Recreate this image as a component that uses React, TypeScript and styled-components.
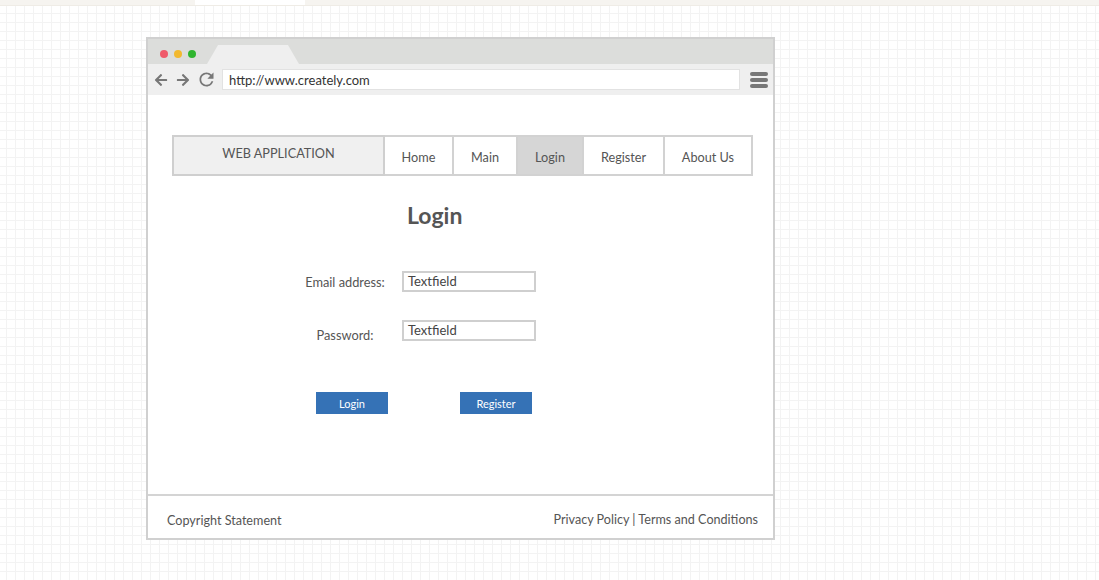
import styled, { createGlobalStyle } from "styled-components";
import { FaArrowLeft, FaArrowRight } from "react-icons/fa";
import { MdRefresh } from "react-icons/md";

const GlobalStyle = createGlobalStyle`
  html, body {
    margin: 0;
    padding: 0;
  }
  body {
    font-family: "Lato", "Liberation Sans", sans-serif;
    color: #555;
  }
`;

const Page = styled.div`
  width: 1099px;
  height: 580px;
  overflow: hidden;
  background-color: #fff;
  background-image:
    linear-gradient(to right, #f3f3f3 1px, transparent 1px),
    linear-gradient(to bottom, #f3f3f3 1px, transparent 1px);
  background-size: 9px 9px;
  background-position: 6px 4px;
`;

const TopStrip = styled.div`
  height: 5px;
  display: flex;
  background: #f6f4f0;
  border-bottom: 1px solid #efece6;
`;

const StripTab = styled.div`
  width: 110px;
  margin-left: 195px;
  background: #fff;
`;

const Stage = styled.div`
  padding: 31px 0 0 146px;
`;

const Window = styled.div`
  width: 625px;
  height: 499px;
  border: 2px solid #d0d0d0;
  display: flex;
  flex-direction: column;
  background: #fff;
`;

const TabBar = styled.div`
  height: 25px;
  background: #dcdddb;
  display: flex;
  align-items: flex-end;
  padding-left: 12px;
`;

const Dots = styled.div`
  display: flex;
  gap: 6px;
  align-self: center;
  margin-top: 4px;
`;

const Dot = styled.span<{ $color: string }>`
  width: 8px;
  height: 8px;
  border-radius: 50%;
  background: ${(p) => p.$color};
`;

const Tab = styled.div`
  width: 92px;
  height: 19px;
  margin-left: 11px;
  background: #efefef;
  clip-path: polygon(0 100%, 12% 0, 88% 0, 100% 100%);
`;

const AddressRow = styled.div`
  height: 31px;
  background: #efefef;
  display: flex;
  align-items: center;
  padding: 0 5px 0 6px;
  color: #777;
`;

const NavIcons = styled.div`
  display: flex;
  align-items: center;
  gap: 8px;
  font-size: 14px;
  width: 68px;
  svg:last-child {
    font-size: 21px;
    margin-left: -2px;
  }
`;

const AddressField = styled.div`
  flex: 1;
  height: 19px;
  background: #fff;
  border: 1px solid #e2e2e2;
  display: flex;
  align-items: center;
  padding-left: 6px;
  font-size: 13px;
  color: #333;
`;

const Burger = styled.div`
  width: 18px;
  margin-left: 10px;
  display: flex;
  flex-direction: column;
  gap: 2px;
  span {
    height: 4px;
    border-radius: 2px;
    background: #777;
  }
`;

const Content = styled.div`
  flex: 1;
  display: flex;
  flex-direction: column;
  padding: 40px 0 0 24px;
`;

const NavBar = styled.div`
  display: flex;
  height: 41px;
`;

const Brand = styled.div`
  width: 209px;
  border: 2px solid #cfcfcf;
  background: #f0f0f0;
  font-size: 12.7px;
  text-align: center;
  line-height: 33px;
`;

const NavItem = styled.div<{ $w: number; $active?: boolean }>`
  width: ${(p) => p.$w}px;
  box-sizing: border-box;
  border: 2px solid #d2d2d2;
  border-left: none;
  background: ${(p) => (p.$active ? "#d6d6d6" : "#fff")};
  font-size: 12.7px;
  display: flex;
  align-items: center;
  justify-content: center;
  padding-top: 2px;
`;

const Heading = styled.h1`
  margin: 26px 0 0 235px;
  font-size: 23px;
  font-weight: 700;
  line-height: 26px;
  color: #555;
`;

const Form = styled.div`
  margin: 43px 0 0 128px;
  display: grid;
  grid-template-columns: 90px 134px;
  column-gap: 12px;
  row-gap: 28px;
`;

const Label = styled.label<{ $drop?: number }>`
  font-size: 12.8px;
  text-align: center;
  align-self: center;
  margin-top: ${(p) => p.$drop ?? 0}px;
`;

const Field = styled.div`
  height: 17px;
  border: 2px solid #cfcfcf;
  font-size: 13px;
  line-height: 17px;
  padding-left: 4px;
  color: #444;
`;

const Buttons = styled.div`
  display: flex;
  gap: 72px;
  margin: 49px 0 0 144px;
`;

const Button = styled.button`
  width: 72px;
  height: 22px;
  border: none;
  padding: 0;
  background: #3572b6;
  color: #fff;
  font-family: "Lato", "Liberation Sans", sans-serif;
  font-size: 11px;
`;

const Footer = styled.div`
  height: 42px;
  border-top: 2px solid #d4d4d4;
  display: flex;
  align-items: center;
  justify-content: space-between;
  padding: 0 15px 0 19px;
  font-size: 12.6px;
  span:first-child {
    margin-top: 6px;
  }
  span:last-child {
    margin-top: 4px;
  }
`;

const navs = [
  { label: "Home", w: 69 },
  { label: "Main", w: 64 },
  { label: "Login", w: 66, active: true },
  { label: "Register", w: 81 },
  { label: "About Us", w: 88 },
];

export default function App() {
  return (
    <Page>
      <GlobalStyle />
      <TopStrip>
        <StripTab />
      </TopStrip>
      <Stage>
        <Window>
          <TabBar>
            <Dots>
              <Dot $color="#ef5a6a" />
              <Dot $color="#f2b92f" />
              <Dot $color="#2fb52f" />
            </Dots>
            <Tab />
          </TabBar>
          <AddressRow>
            <NavIcons>
              <FaArrowLeft />
              <FaArrowRight />
              <MdRefresh />
            </NavIcons>
            <AddressField>http://www.creately.com</AddressField>
            <Burger>
              <span />
              <span />
              <span />
            </Burger>
          </AddressRow>
          <Content>
            <NavBar>
              <Brand>WEB APPLICATION</Brand>
              {navs.map((nav) => (
                <NavItem key={nav.label} $w={nav.w} $active={nav.active}>
                  {nav.label}
                </NavItem>
              ))}
            </NavBar>
            <Heading>Login</Heading>
            <Form>
              <Label>Email address:</Label>
              <Field>Textfield</Field>
              <Label $drop={7}>Password:</Label>
              <Field>Textfield</Field>
            </Form>
            <Buttons>
              <Button>Login</Button>
              <Button>Register</Button>
            </Buttons>
          </Content>
          <Footer>
            <span>Copyright Statement</span>
            <span>Privacy Policy | Terms and Conditions</span>
          </Footer>
        </Window>
      </Stage>
    </Page>
  );
}
